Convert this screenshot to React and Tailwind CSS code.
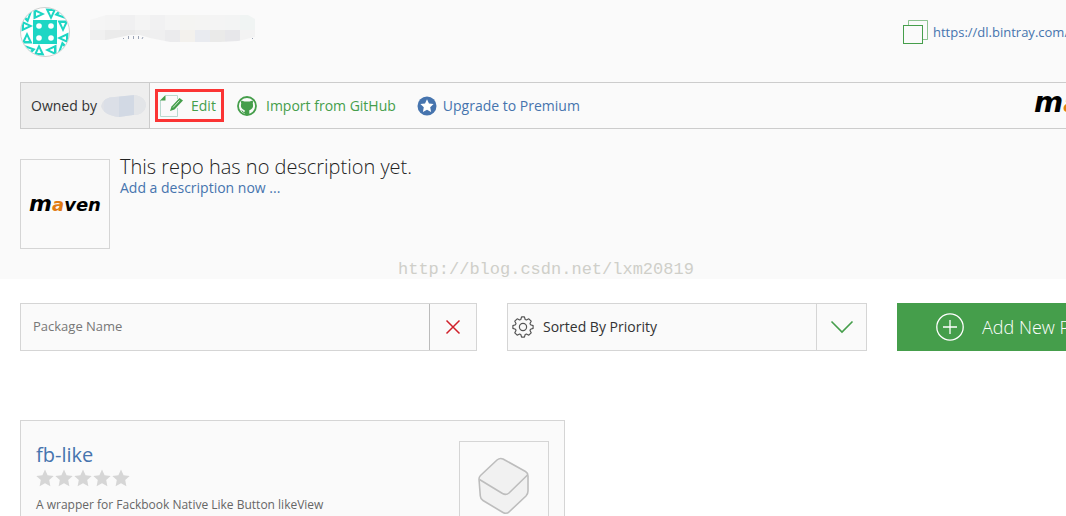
import { useState } from "react";

const TEAL = "#1dd6c4";

// direction of every identicon tile, in degrees (0 = pointing right)
const TILES = [
  { x: 12, y: 0, turn: 0 },
  { x: 24, y: 0, turn: 90 },
  { x: 0, y: 12, turn: 0 },
  { x: 36, y: 12, turn: 90 },
  { x: 0, y: 24, turn: 270 },
  { x: 36, y: 24, turn: 180 },
  { x: 12, y: 36, turn: 270 },
  { x: 24, y: 36, turn: 180 },
  { x: 1, y: 1, turn: 315 },
  { x: 35, y: 1, turn: 45 },
  { x: 1, y: 35, turn: 225 },
  { x: 35, y: 35, turn: 135 },
];

function Avatar() {
  return (
    <svg width="50" height="50" viewBox="0 0 50 50" className="shrink-0" aria-label="Avatar">
      <clipPath id="avatar">
        <circle cx="25" cy="25" r="24" />
      </clipPath>
      <circle cx="25" cy="25" r="24.5" fill="#fff" stroke="#d0d0d0" />
      <g clipPath="url(#avatar)">
        <g transform="translate(1 1)">
          {TILES.map((t) => (
            <g key={`${t.x}-${t.y}`} transform={`translate(${t.x} ${t.y}) rotate(${t.turn} 6 6)`}>
              <path d="M0.500 0.500L12 6L0.500 11.500Z" fill={TEAL} />
              <path d="M3 4L7.500 6L3 8Z" fill="#fff" />
            </g>
          ))}
          <rect x="12" y="12" width="24" height="24" fill={TEAL} />
          {[18, 30].map((x) =>
            [18, 30].map((y) => <circle key={`${x}-${y}`} cx={x} cy={y} r="2.800" fill="#fff" />)
          )}
        </g>
      </g>
    </svg>
  );
}

// pixelated user name in the header
function HiddenName() {
  const top = ["#f5f5f5", "#f4f4f4", "#f0f0f1", "#f4f4f4", "#f1f1f2", "#f4f4f4", "#f4f4f2", "#f4f4f3", "#f4f4f4", "#f3f4f4", "#f0f4f3"];
  const bottom = ["#f0f0f0", "#ebebeb", "#eaeaea", "#eeeeee", "#efeff0", "#ebebed", "#f3f1ed", "#e9ebf0", "#eaeae9", "#e7e7ea", "#f3f3f3"];
  return (
    <svg width="166" height="28" viewBox="0 0 166 28" aria-hidden="true">
      <clipPath id="name">
        <path d="M0 5L16 0H158L165 4V22L148 26L130 27H80L60 23L50 20H40L16 25L0 25Z" />
      </clipPath>
      <g clipPath="url(#name)">
        {top.map((c, i) => (
          <rect key={i} x={i * 15} y="0" width="15" height="15" fill={c} />
        ))}
        {bottom.map((c, i) => (
          <rect key={i} x={i * 15} y="15" width="15" height="13" fill={c} />
        ))}
      </g>
      <path d="M33 23.500h1M38.500 21v3M43.500 21v3M48.500 21v3M53 22l-1 2M162 23.500h1" stroke="#9aa3b5" />
    </svg>
  );
}

function HiddenOwner() {
  return (
    <svg width="45" height="22" viewBox="0 0 45 22" aria-hidden="true">
      <clipPath id="owner">
        <path d="M0 11Q2 2 14 2L34 0Q45 2 45 11Q43 20 32 20L18 22Q2 20 0 11Z" />
      </clipPath>
      <g clipPath="url(#owner)">
        <rect width="45" height="22" fill="#dfe1e6" />
        <rect x="3" width="15" height="22" fill="#dbdfe7" />
        <rect x="18" width="15" height="22" fill="#d2d9e4" />
        <rect x="33" width="12" height="22" fill="#e3e5e8" />
      </g>
    </svg>
  );
}

function CopyIcon() {
  return (
    <svg width="26" height="26" viewBox="0 0 26 26" fill="none" stroke="#459e4b" className="shrink-0">
      <path d="M5.500 6V1.500H24.500V20.500H20" strokeOpacity="0.600" />
      <rect x="0.500" y="6.500" width="19" height="18" />
    </svg>
  );
}

function EditIcon() {
  return (
    <svg width="24" height="22" viewBox="0 0 24 22" fill="none">
      <path d="M6 0.500H17.500V4M17.500 13V21.500H0.500V5" stroke="#b9d9cf" />
      <path d="M0 5.500L5.500 0V5.500Z" fill="#459e4b" />
      <path d="M10 16L11.500 11.500L19.500 3L23 5.500L14.500 14.500Z" fill="#459e4b" />
      <path d="M13 12.500L19.500 5.500" stroke="#d7ecd8" />
    </svg>
  );
}

function GithubIcon() {
  return (
    <svg width="20" height="20" viewBox="0 0 20 20">
      <circle cx="10" cy="10" r="9" fill="none" stroke="#459e4b" strokeWidth="1.800" />
      <path
        d="M4.300 4.500L7.500 5.500H12.500L15.700 4.500Q16.300 6 15.800 7.500Q16.800 11 14.500 13Q13.500 13.900 12.300 14.200V19H7.700V14.200Q6.500 13.900 5.500 13Q3.200 11 4.200 7.500Q3.700 6 4.300 4.500Z"
        fill="#459e4b"
      />
      <path d="M8 16.500Q6 17 4.800 14.500" fill="none" stroke="#459e4b" />
    </svg>
  );
}

const STAR = "M10 1.500L12.600 7.200L18.700 7.900L14.200 12L15.400 18.200L10 15.200L4.600 18.200L5.800 12L1.300 7.900L7.400 7.200Z";

function PremiumIcon() {
  return (
    <svg width="20" height="20" viewBox="0 0 20 20">
      <circle cx="10" cy="10" r="9.500" fill="#4674ae" />
      <path d={STAR} fill="#fff" transform="translate(2.400 2.100) scale(0.760)" />
    </svg>
  );
}

function GearIcon() {
  return (
    <svg width="22" height="22" viewBox="0 0 22 22" fill="none" stroke="#555" strokeWidth="1.200" strokeLinejoin="round" className="shrink-0">
      <circle cx="11" cy="11" r="3.600" />
      <path d="M8.800 3.500L9.600 0.900H12.400L13.200 3.500Q13.800 3.700 14.400 4L16.800 2.800L19.200 5.200L18 7.600Q18.300 8.200 18.500 8.800L21.100 9.600V12.400L18.500 13.200Q18.300 13.800 18 14.400L19.200 16.800L16.800 19.200L14.400 18Q13.800 18.300 13.200 18.500L12.400 21.100H9.600L8.800 18.500Q8.200 18.300 7.600 18L5.200 19.200L2.800 16.800L4 14.400Q3.700 13.800 3.500 13.200L0.900 12.400V9.600L3.500 8.800Q3.700 8.200 4 7.600L2.800 5.200L5.200 2.800L7.600 4Q8.200 3.700 8.800 3.500Z" />
    </svg>
  );
}

function PackageIcon() {
  return (
    <svg width="52" height="58" viewBox="0 0 52 58" fill="#f1f1f1" stroke="#bdbdbd" strokeWidth="1.600" strokeLinejoin="round">
      <path d="M1 22Q1 20 2.500 18.500L19 3Q22 0.500 25 2L47.500 14.500Q50 16 50 19V34Q50 37 48 39L31.500 54.500Q28.500 57.500 25 55.500L5 43.500Q2.500 42 2.300 39Z" />
      <path d="M1.500 22.500L24.500 36.500Q28 38.500 31 36L49.500 18" fill="none" />
    </svg>
  );
}

function Maven({ large }) {
  return (
    <span
      className={
        large
          ? "font-['DejaVu_Sans',sans-serif] text-2xl leading-8 font-bold italic text-black"
          : "font-['DejaVu_Sans',sans-serif] text-lg leading-6 font-bold italic text-black"
      }
    >
      <span className={large ? "text-[28px]" : "text-[22px]"}>m</span>
      <span className="text-[#e07b12]">a</span>ven
    </span>
  );
}

function RepoHeader() {
  return (
    <header className="relative h-[279px] bg-[#fafafa] pl-5 pt-[7px]">
      <div className="flex justify-between">
        <div className="flex gap-5">
          <Avatar />
          <div className="pt-2">
            <HiddenName />
          </div>
        </div>
        <a href="#url" className="flex w-[163px] gap-1 pt-3 text-[13px] leading-[26px] text-[#4674ae]">
          <CopyIcon />
          https://dl.bintray.com/
        </a>
      </div>

      <nav className="mt-[25px] flex h-[47px] items-stretch border-y border-l border-[#ccc] text-sm">
        <div className="flex w-[129px] items-center gap-1 border-r border-[#ccc] bg-[#eee] pl-[10px] text-[#333]">
          Owned by <HiddenOwner />
        </div>
        <div className="flex flex-1 items-center pl-[5px] text-[#459e4b]">
          <a href="#edit" className="flex h-[33px] w-[69px] items-center gap-[7px] border-3 border-[#fb3434] pl-[2px]">
            <EditIcon />
            Edit
          </a>
          <a href="#import" className="ml-[13px] flex items-center gap-[9px]">
            <GithubIcon />
            Import from GitHub
          </a>
          <a href="#premium" className="ml-[21px] flex items-center gap-[6px] text-[#4674ae]">
            <PremiumIcon />
            Upgrade to Premium
          </a>
        </div>
        <div className="w-8 overflow-hidden pt-1">
          <Maven large />
        </div>
      </nav>

      <div className="mt-[30px] flex gap-[10px]">
        <div className="flex h-[90px] w-[90px] items-center justify-center border border-[#d5d5d5]">
          <Maven />
        </div>
        <div>
          <h1 className="-mt-1 text-xl leading-6 font-light text-[#222]">This repo has no description yet.</h1>
          <a href="#description" className="block text-sm leading-[18px] text-[#4674ae]">
            Add a description now ...
          </a>
        </div>
      </div>
      <p className="absolute left-[398px] top-[260px] font-['Liberation_Mono',monospace] text-[17px] leading-5 text-[#cfcfc9]">
        http://blog.csdn.net/lxm20819
      </p>
    </header>
  );
}

function Filters() {
  const [name, setName] = useState("");

  return (
    <div className="mt-6 flex gap-[30px] pl-5">
      <div className="flex h-12 w-[457px] shrink-0 border border-[#d5d5d5] bg-[#fafafa]">
        <input
          type="text"
          aria-label="Package Name"
          placeholder="Package Name"
          value={name}
          onChange={(e) => setName(e.target.value)}
          className="min-w-0 flex-1 pl-3 text-[13px] text-[#333] outline-none placeholder:text-[#777]"
        />
        <button
          type="button"
          aria-label="Clear"
          onClick={() => setName("")}
          className="flex w-[47px] items-center justify-center border-l border-[#bbb]"
        >
          <svg width="16" height="16" viewBox="0 0 16 16" stroke="#d0202a" strokeWidth="1.500">
            <path d="M1.500 1.500L14.500 14.500M14.500 1.500L1.500 14.500" />
          </svg>
        </button>
      </div>

      <div className="relative flex h-12 w-[360px] shrink-0 items-center border border-[#d5d5d5] bg-[#fafafa] pl-1">
        <GearIcon />
        <select aria-label="Sort" className="h-full flex-1 appearance-none pl-[9px] text-sm text-[#333] outline-none">
          <option>Sorted By Priority</option>
        </select>
        <span className="pointer-events-none flex h-full w-[50px] items-center justify-center border-l border-[#d5d5d5]">
          <svg width="24" height="14" viewBox="0 0 24 14" fill="none" stroke="#459e4b" strokeWidth="1.600">
            <path d="M1.500 1.500L12 12L22.500 1.500" />
          </svg>
        </span>
      </div>

      <button type="button" className="flex h-12 shrink-0 items-center gap-[18px] bg-[#459e4b] px-[39px] text-lg font-light text-white">
        <svg width="28" height="28" viewBox="0 0 28 28" fill="none" stroke="#fff" strokeWidth="1.300">
          <circle cx="14" cy="14" r="13.200" />
          <path d="M14 7V21M7 14H21" />
        </svg>
        Add New Package
      </button>
    </div>
  );
}

function PackageCard() {
  return (
    <article className="ml-5 mt-[69px] flex h-[130px] w-[545px] justify-between border border-[#d5d5d5] bg-[#fafafa] px-[15px] pt-5">
      <div>
        <h2 className="text-xl leading-7">
          <a href="#fb-like" className="text-[#4674ae]">
            fb-like
          </a>
        </h2>
        <div className="flex gap-px" aria-label="No rating">
          {[1, 2, 3, 4, 5].map((n) => (
            <svg key={n} width="18" height="18" viewBox="1 1 18 18" fill="#d6d6d6">
              <path d={STAR} />
            </svg>
          ))}
        </div>
        <p className="mt-2 text-xs leading-5 text-[#666]">A wrapper for Fackbook Native Like Button likeView</p>
      </div>
      <div className="flex h-[90px] w-[90px] items-center justify-center border border-[#d5d5d5]">
        <PackageIcon />
      </div>
    </article>
  );
}

export default function App() {
  return (
    <main className="h-screen overflow-hidden bg-white font-['Open_Sans',sans-serif] whitespace-nowrap">
      <RepoHeader />
      <Filters />
      <PackageCard />
    </main>
  );
}
